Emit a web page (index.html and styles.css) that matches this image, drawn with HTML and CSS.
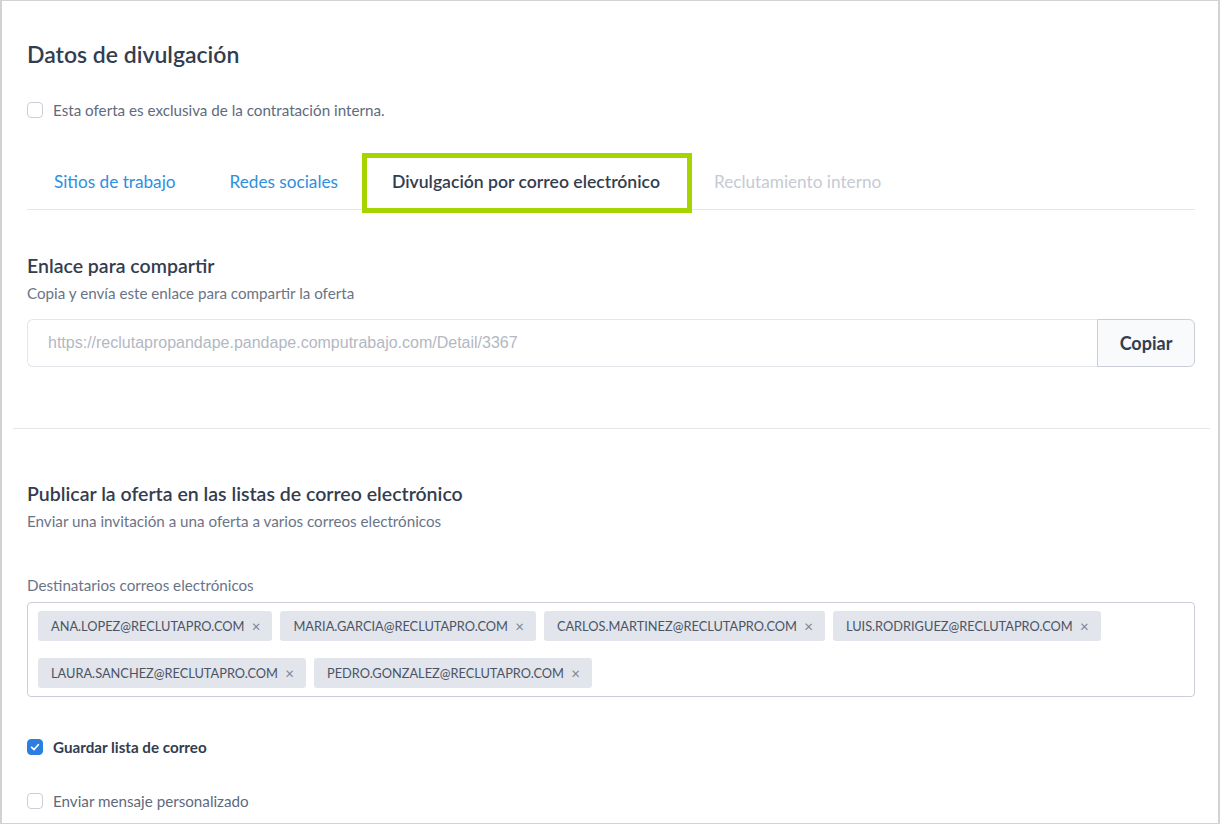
FILE: index.html
```html
<!DOCTYPE html>
<html lang="es">
<head>
<meta charset="utf-8">
<title>Datos de divulgación</title>
<link rel="stylesheet" href="styles.css">
</head>
<body>
<div class="frame">
  <h1 class="title">Datos de divulgación</h1>
  <label class="check check-top">
    <span class="box"></span>
    <span class="check-text">Esta oferta es exclusiva de la contratación interna.</span>
  </label>

  <nav class="tabs">
    <span class="tab link">Sitios de trabajo</span>
    <span class="tab link">Redes sociales</span>
    <span class="tab active">Divulgación por correo electrónico</span>
    <span class="tab disabled">Reclutamiento interno</span>
  </nav>

  <h2 class="sec-title first">Enlace para compartir</h2>
  <p class="sec-sub">Copia y envía este enlace para compartir la oferta</p>
  <div class="share">
    <input class="share-input" type="text" placeholder="https://reclutapropandape.pandape.computrabajo.com/Detail/3367">
    <button class="share-btn" type="button">Copiar</button>
  </div>

  <hr class="divider">

  <h2 class="sec-title second">Publicar la oferta en las listas de correo electrónico</h2>
  <p class="sec-sub">Enviar una invitación a una oferta a varios correos electrónicos</p>

  <div class="field-label">Destinatarios correos electrónicos</div>
  <div class="tagbox">
    <span class="tag">ANA.LOPEZ@RECLUTAPRO.COM <span class="x">×</span></span>
    <span class="tag">MARIA.GARCIA@RECLUTAPRO.COM <span class="x">×</span></span>
    <span class="tag">CARLOS.MARTINEZ@RECLUTAPRO.COM <span class="x">×</span></span>
    <span class="tag">LUIS.RODRIGUEZ@RECLUTAPRO.COM <span class="x">×</span></span>
    <span class="tag">LAURA.SANCHEZ@RECLUTAPRO.COM <span class="x">×</span></span>
    <span class="tag">PEDRO.GONZALEZ@RECLUTAPRO.COM <span class="x">×</span></span>
  </div>

  <label class="check check-save">
    <span class="box checked">
      <svg viewBox="0 0 16 16" width="16" height="16"><path d="M4.2 8.3 L6.9 10.9 L11.8 5.4" fill="none" stroke="#fff" stroke-width="2" stroke-linecap="round" stroke-linejoin="round"/></svg>
    </span>
    <span class="check-text strong">Guardar lista de correo</span>
  </label>
  <label class="check check-msg">
    <span class="box"></span>
    <span class="check-text">Enviar mensaje personalizado</span>
  </label>
</div>
</body>
</html>
```

FILE: styles.css
```css
* { box-sizing: border-box; }
html, body { margin: 0; padding: 0; background: #fff; }
body {
  font-family: Lato, "Open Sans", "Noto Sans", sans-serif;
  color: #333d4f;
}
.frame {
  width: 1220px;
  height: 824px;
  border: 1px solid #d2d2d2;
  border-left-width: 2px;
  border-right-width: 2px;
  padding: 0 23px 0 25px;
  overflow: hidden;
}
.title {
  margin: 39px 0 0;
  font-size: 23px;
  line-height: 28px;
  font-weight: 600;
  color: #333d4f;
}
.check {
  display: flex;
  align-items: center;
  height: 20px;
}
.check-top { margin-top: 32px; }
.box {
  width: 16px;
  height: 16px;
  border: 1px solid #c9ced7;
  border-radius: 4px;
  background: #fff;
  margin-right: 10px;
  display: flex;
  align-items: center;
  justify-content: center;
  flex: none;
}
.box.checked {
  background: #2c7fe0;
  border-color: #2c7fe0;
}
.check-text {
  font-size: 15.2px;
  color: #5e6a7e;
}
.check-text.strong {
  font-weight: 700;
  color: #333d4f;
}
.tabs {
  margin-top: 33px;
  height: 57px;
  display: flex;
  align-items: center;
  border-bottom: 1px solid #e4e6ea;
}
.tab {
  padding: 0 27px;
  height: 56px;
  display: flex;
  align-items: center;
  font-size: 17.2px;
  position: relative;
}
.tab.link { color: #2d8fe0; }
.tab.disabled { color: #c6cad3; }
.tab.active {
  color: #333d4f;
  font-weight: 600;
  font-size: 17.6px;
}
.tab.active::after {
  content: "";
  position: absolute;
  left: -3px;
  right: -5px;
  top: 0;
  bottom: -4px;
  border: 5px solid #a6d400;
}
.sec-title {
  font-size: 19.5px;
  line-height: 24px;
  font-weight: 600;
  margin: 0;
  color: #333d4f;
}
.sec-title.first { margin-top: 44px; }
.sec-title.second { margin-top: 53px; }
.sec-sub {
  margin: 5px 0 0;
  font-size: 15.2px;
  line-height: 20px;
  color: #6a7487;
}
.share {
  margin-top: 16px;
  display: flex;
  height: 48px;
}
.share-input {
  flex: 1;
  height: 48px;
  border: 1px solid #e3e6eb;
  border-right: none;
  border-radius: 6px 0 0 6px;
  padding: 0 20px;
  font-family: "Liberation Sans", Arial, sans-serif;
  font-size: 16px;
  outline: none;
}
.share-input::placeholder { color: #b3b8c2; }
.share-btn {
  width: 98px;
  height: 48px;
  border: 1px solid #c9ced7;
  border-radius: 0 6px 6px 0;
  background: #f9fafb;
  font-family: Lato, "Open Sans", sans-serif;
  font-size: 18px;
  font-weight: 700;
  color: #333d4f;
}
.divider {
  margin: 61px -15px 0 -14px;
  border: none;
  border-top: 1px solid #e4e6ea;
  height: 0;
}
.field-label {
  margin-top: 44px;
  font-size: 15.2px;
  line-height: 20px;
  color: #6a7487;
}
.tagbox {
  margin-top: 7px;
  height: 95px;
  border: 1px solid #c9ced7;
  border-radius: 4px;
  padding: 8px 10px;
  display: flex;
  flex-wrap: wrap;
  align-content: flex-start;
  column-gap: 8px;
  row-gap: 17px;
}
.tag {
  height: 30px;
  display: inline-flex;
  align-items: center;
  padding: 0 12px 0 13px;
  background: #e2e5eb;
  border-radius: 3px;
  font-size: 12.8px;
  color: #4a5466;
  white-space: pre;
}
.tag .x {
  margin-left: 4px;
  color: #7b8494;
  font-size: 15px;
}
.check-save { margin-top: 40px; }
.check-msg { margin-top: 34px; }
```
